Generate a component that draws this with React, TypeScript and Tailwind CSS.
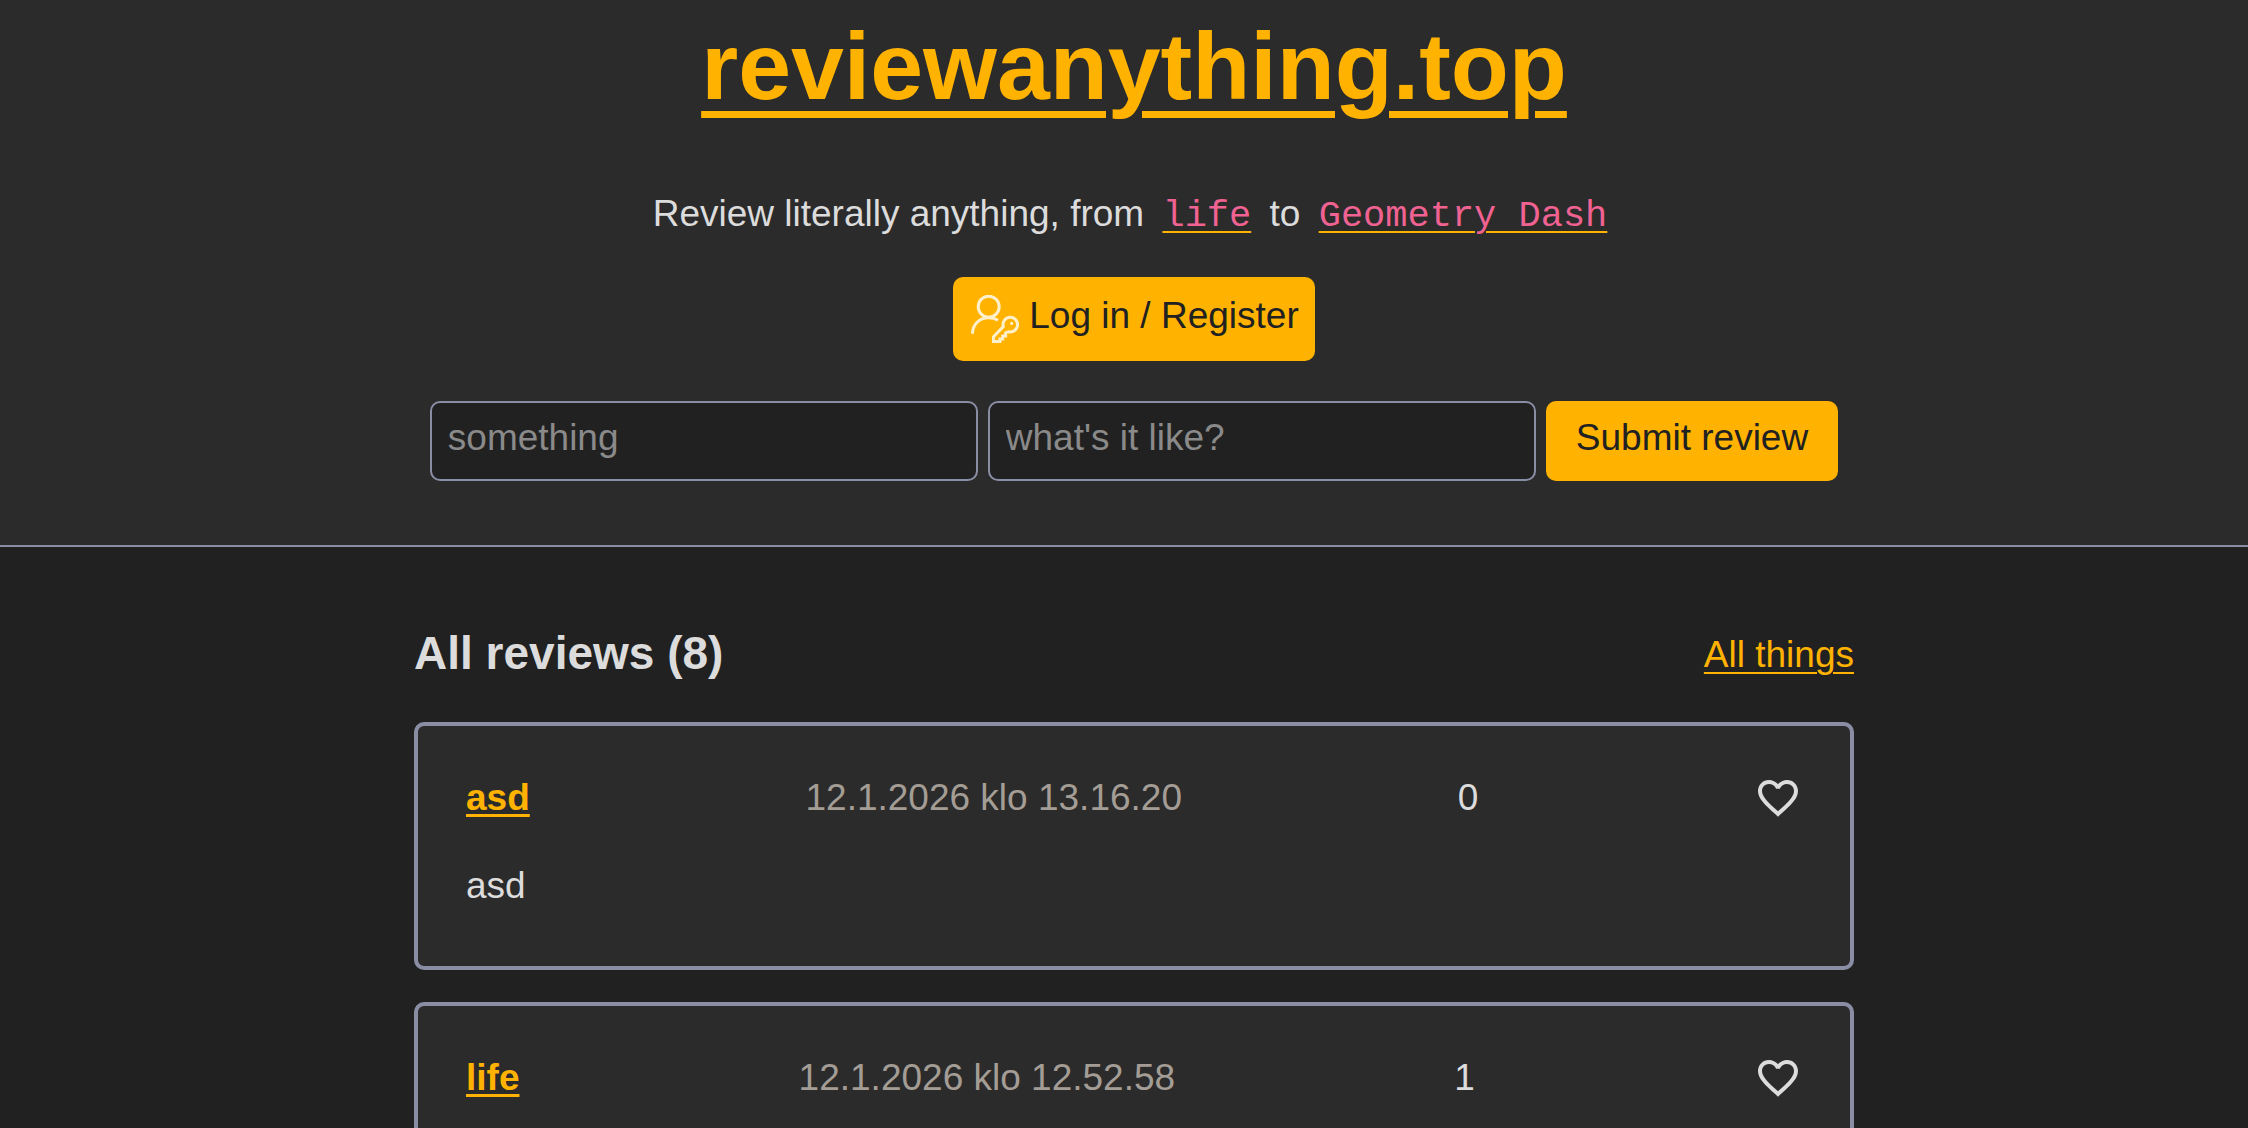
import React from "react";
import { MdFavoriteBorder } from "react-icons/md";

type Review = { thing: string; date: string; likes: number; text: string };

const reviews: Review[] = [
  { thing: "asd", date: "12.1.2026 klo 13.16.20", likes: 0, text: "asd" },
  { thing: "life", date: "12.1.2026 klo 12.52.58", likes: 1, text: "" },
];

const link = "text-[#ffb300] underline decoration-2 underline-offset-[5px]";
const code = "font-['Liberation_Mono',monospace] text-[#f06292]";
const field =
  "h-20 w-[548px] rounded-[10px] border-2 border-[#898ea4] bg-[#212121] px-4 pb-1.5 placeholder:text-[#8a8a8a] placeholder:opacity-100";

function UserKeyIcon() {
  return (
    <svg viewBox="0 0 48 48" className="size-12 shrink-0" fill="none" stroke="#fff0cc" strokeWidth="3" aria-hidden="true">
      <circle cx="17.700" cy="11.700" r="10.500" />
      <path d="M1.500 38.700C1.500 29.500 8.500 22.800 17.700 22.800C21.500 22.800 24.500 23.700 27 25.200" />
      <path d="M32.300 31.600A7.300 7.300 0 1 1 37.600 36.700L34.700 37.700V41H31.700V44H29V46.500H22.500V41.800Z" />
      <circle cx="40.700" cy="28.400" r="1.600" fill="#fff0cc" stroke="none" />
    </svg>
  );
}

function ReviewCard({ review }: { review: Review }) {
  return (
    <article className="min-h-[248px] rounded-[10px] border-4 border-[#898ea4] bg-[#2b2b2b] px-12 py-11">
      <div className="flex h-14 items-center justify-between">
        <a href="#" className="font-bold text-[#ffb300] underline decoration-3 underline-offset-4">
          {review.thing}
        </a>
        <span className="text-[#a49d95]">{review.date}</span>
        <span>{review.likes}</span>
        <button type="button" aria-label={"Like " + review.thing}>
          <MdFavoriteBorder className="size-12" />
        </button>
      </div>
      {review.text && <p className="mt-8">{review.text}</p>}
    </article>
  );
}

export default function App() {
  return (
    <div className="h-screen overflow-hidden bg-[#212121] font-['Liberation_Sans',sans-serif] text-[37px] leading-[56px] text-[#dcdcdc]">
      <header className="flex flex-col items-center border-b-2 border-[#898ea4] bg-[#2b2b2b] pt-3 pb-16 pl-5">
        <h1 className="text-[95px] leading-[108px] font-bold">
          <a href="#" className="text-[#ffb300] underline decoration-[7px] underline-offset-[12px]">
            reviewanything.top
          </a>
        </h1>
        <p className="mt-[66px]">
          Review literally anything, from{" "}
          <a href="#" className={"mx-2 " + link}>
            <code className={code}>life</code>
          </a>{" "}
          to{" "}
          <a href="#" className={"mx-2 " + link}>
            <code className={code}>Geometry Dash</code>
          </a>
        </p>
        <button type="button" className="mt-[33px] flex h-[84px] items-center gap-2.5 rounded-[10px] bg-[#ffb300] pr-4 pl-[18px] text-[#212121]">
          <UserKeyIcon />
          <span className="pb-1.5">Log in / Register</span>
        </button>
        <form className="mt-10 flex gap-2.5" onSubmit={(e) => e.preventDefault()}>
          <input className={field} placeholder="something" aria-label="Thing" />
          <input className={field} placeholder="what's it like?" aria-label="Review" />
          <button type="submit" className="h-20 rounded-[10px] bg-[#ffb300] px-[30px] pb-1.5 text-[#212121]">
            Submit review
          </button>
        </form>
      </header>
      <main className="pl-5">
        <div className="mx-auto max-w-[1440px] pt-20">
          <div className="flex items-center justify-between">
            <h2 className="pb-1 text-[46px] leading-[52px] font-bold">All reviews (8)</h2>
            <a href="#" className={link}>All things</a>
          </div>
          <div className="mt-[39px] flex flex-col gap-8">
            {reviews.map((r) => (
              <ReviewCard key={r.thing} review={r} />
            ))}
          </div>
        </div>
      </main>
    </div>
  );
}
